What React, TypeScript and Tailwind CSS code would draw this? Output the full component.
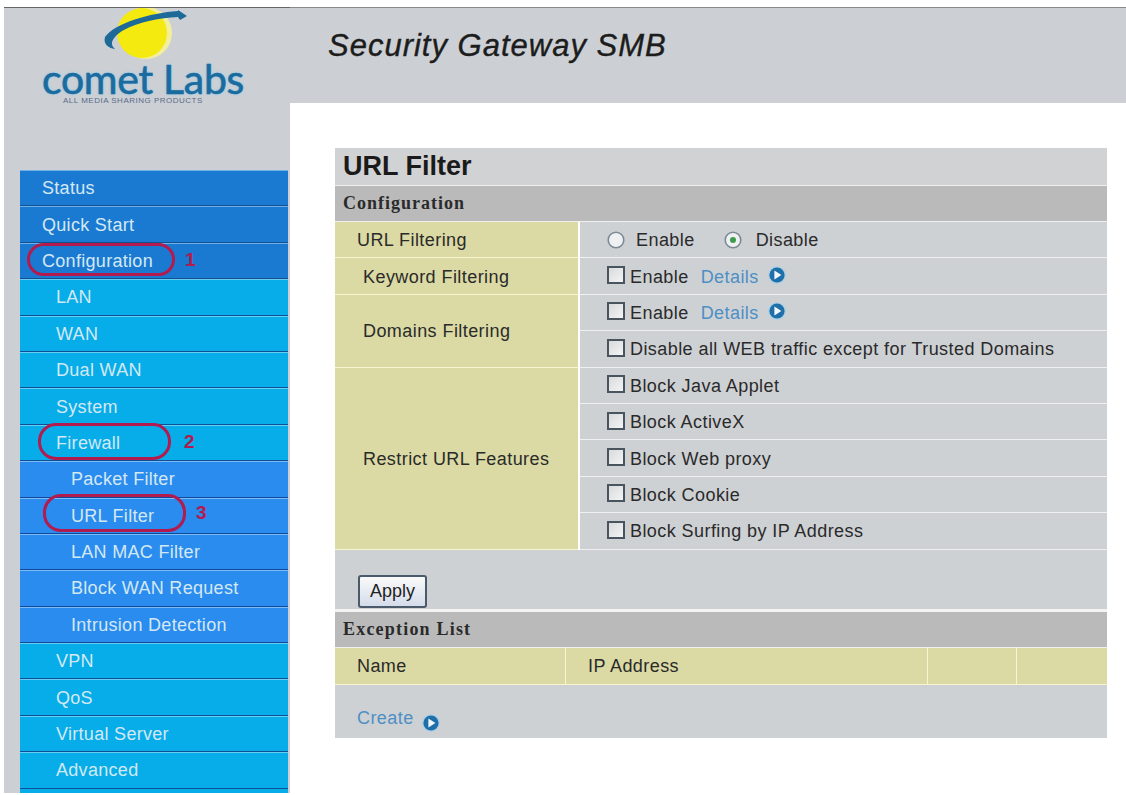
import React from 'react';

const font = 'font-["Liberation_Sans",Arial,sans-serif]';

const navItems: { label: string; kind: 'top' | 'main' | 'sub' }[] = [
    { label: 'Status', kind: 'top' },
    { label: 'Quick Start', kind: 'top' },
    { label: 'Configuration', kind: 'top' },
    { label: 'LAN', kind: 'main' },
    { label: 'WAN', kind: 'main' },
    { label: 'Dual WAN', kind: 'main' },
    { label: 'System', kind: 'main' },
    { label: 'Firewall', kind: 'main' },
    { label: 'Packet Filter', kind: 'sub' },
    { label: 'URL Filter', kind: 'sub' },
    { label: 'LAN MAC Filter', kind: 'sub' },
    { label: 'Block WAN Request', kind: 'sub' },
    { label: 'Intrusion Detection', kind: 'sub' },
    { label: 'VPN', kind: 'main' },
    { label: 'QoS', kind: 'main' },
    { label: 'Virtual Server', kind: 'main' },
    { label: 'Advanced', kind: 'main' },
];

const GoIcon = () => (
    <svg width="18" height="18" viewBox="0 0 18 18" className="block shrink-0">
        <circle cx="9" cy="9" r="8.8" fill="#a9cfe8" />
        <circle cx="9" cy="9" r="7.6" fill="#1f6fa8" />
        <path d="M6.4 4.4 L13.4 9 L6.4 13.6 Z" fill="#f2f7fb" />
    </svg>
);

const Checkbox = () => (
    <span className="w-[18px] h-[18px] mb-[2px] shrink-0 border-2 border-[#4a545e] bg-gradient-to-br from-[#d8dadc] to-[#f4f4f4]" />
);

const Radio = ({ checked }: { checked?: boolean }) => (
    <svg width="18" height="18" viewBox="0 0 18 18" className="block shrink-0">
        <circle cx="9" cy="9" r="7.8" fill="#eef0f2" stroke="#7d8a96" strokeWidth="1.6" />
        {checked && <circle cx="9" cy="9" r="3" fill="#3f9a4a" />}
    </svg>
);

const bodyText = 'text-[18px] tracking-[0.43px] text-[#2a2a2a]';

const CheckRow = ({ label, details }: { label: string; details?: boolean }) => (
    <div className="h-[36.4px] flex items-center pl-[27px] bg-[#ced1d4] border-b border-[#f0f0f0]">
        <Checkbox />
        <span className={`${bodyText} ml-[5px] pt-[2px]`}>{label}</span>
        {details && (
            <>
                <span className="text-[18px] tracking-[0.43px] text-[#4d8fc4] ml-[12px] pt-[2px]">Details</span>
                <span className="ml-[9px] mb-[2px]"><GoIcon /></span>
            </>
        )}
    </div>
);

const LeftCell = ({ label, className }: { label: string; className: string }) => (
    <div className={`${className} ${bodyText} flex items-center bg-[#dbdaa4] border-b border-[#f7f5d0] pt-[2px]`}>
        {label}
    </div>
);

const Mark = ({ className }: { className: string }) => (
    <div className={`absolute rounded-[18px] border-[3px] border-[#b31a4d] ${className}`} />
);

const MarkNum = ({ n, className }: { n: string; className: string }) => (
    <div className={`absolute text-[19px] leading-[20px] font-bold text-[#b31a4d] ${className}`}>{n}</div>
);

export default function App() {
    return (
        <div className={`${font} w-[1126px] h-[795px] bg-white pl-[4px] pt-[7px] overflow-hidden flex items-start`}>
            {/* left column: logo + menu */}
            <aside className="relative w-[286px] shrink-0 bg-[#ccd0d4] border-t border-[#666]">
                <div className="relative h-[162px]">
                    <svg width="110" height="60" viewBox="0 0 110 60" className="absolute left-[96px] top-0">
                        <circle cx="46" cy="25" r="26" fill="#f2ee9c" />
                        <circle cx="42" cy="25" r="25" fill="#f4ea10" />
                        <path
                            d="M78 3 C50 5 15 15 5 29 C3 36 8 40 15 41 C9 36 12 30 22 23 C40 13 60 10 78 9 L80 12 L87 8 L78 2 Z"
                            fill="#1d6a99"
                        />
                    </svg>
                    <div className="absolute left-[38px] top-[56px] text-[41px] leading-[30px] font-['Lato',sans-serif] text-[#1a6b9e] tracking-[-0.3px] whitespace-nowrap [-webkit-text-stroke:0.6px_#1a6b9e] [text-shadow:0_0_3px_#7ec3ee]">
                        comet Labs
                    </div>
                    <div className="absolute left-[59px] top-[88px] text-[8px] leading-[9px] tracking-[0.5px] whitespace-nowrap text-[#5a6a8a]">
                        ALL MEDIA SHARING PRODUCTS
                    </div>
                </div>
                <nav className="ml-[16px] w-[268px]">
                    {navItems.map(item => (
                        <div
                            key={item.label}
                            className={`h-[36.4px] flex items-center border-t border-b pt-[1px] text-[18px] tracking-[0.3px] text-[#d4e8f4] ${
                                item.kind === 'top'
                                    ? 'pl-[22px] bg-[#1a7ad2] border-t-[#6fb2ea] border-b-[#12508f]'
                                    : item.kind === 'main'
                                      ? 'pl-[36px] bg-[#06ade9] border-t-[#66cef2] border-b-[#0e4f98]'
                                      : 'pl-[51px] bg-[#2a8cee] border-t-[#7cbcf4] border-b-[#10499c]'
                            }`}
                        >
                            {item.label}
                        </div>
                    ))}
                    <div className="h-[4px] bg-[#06ade9]" />
                </nav>
                {/* red marks drawn on the screenshot */}
                <Mark className="left-[23px] top-[235px] w-[148px] h-[33px]" />
                <MarkNum n="1" className="left-[181px] top-[242px]" />
                <Mark className="left-[34px] top-[415px] w-[133px] h-[37px]" />
                <MarkNum n="2" className="left-[180px] top-[424px]" />
                <Mark className="left-[39px] top-[486px] w-[143px] h-[38px]" />
                <MarkNum n="3" className="left-[192px] top-[495px]" />
            </aside>

            <main className="flex-1">
                <header className="h-[96px] bg-[#ccd0d4] border-t border-[#888] pl-[38px] pt-[20px]">
                    <h1 className="text-[31px] leading-[36px] italic tracking-[1px] text-[#1c1c1c] [-webkit-text-stroke:0.4px_#1c1c1c]">
                        Security Gateway SMB
                    </h1>
                </header>
                <div className="pl-[45px] pt-[45px]">
                    <div className="w-[772px]">
                        <div className="h-[38px] flex items-center pl-[8px] bg-[#d1d2d3] text-[27px] font-bold text-[#1a1a1a] border-b border-[#f0f0f0]">
                            URL Filter
                        </div>
                        <div className="h-[36px] flex items-center pl-[8px] bg-[#bababa] border-b border-[#f0f0f0] text-[18px] tracking-[1px] font-bold font-['Liberation_Serif',serif] text-[#2a2a2a]">
                            Configuration
                        </div>

                        <div className="grid grid-cols-[243px_1fr] gap-x-[2px]">
                            <div className="flex flex-col">
                                <LeftCell label="URL Filtering" className="h-[36.4px] pl-[22px]" />
                                <LeftCell label="Keyword Filtering" className="h-[36.4px] pl-[28px]" />
                                <LeftCell label="Domains Filtering" className="h-[72.8px] pl-[28px]" />
                                <LeftCell label="Restrict URL Features" className="h-[182px] pl-[28px]" />
                            </div>
                            <div className="flex flex-col">
                                <div className={`${bodyText} h-[36.4px] flex items-center pl-[27px] bg-[#ced1d4] border-b border-[#f0f0f0]`}>
                                    <Radio />
                                    <span className="ml-[11px] pt-[2px]">Enable</span>
                                    <span className="ml-[29px]"><Radio checked /></span>
                                    <span className="ml-[14px] pt-[2px]">Disable</span>
                                </div>
                                <CheckRow label="Enable" details />
                                <CheckRow label="Enable" details />
                                <CheckRow label="Disable all WEB traffic except for Trusted Domains" />
                                <CheckRow label="Block Java Applet" />
                                <CheckRow label="Block ActiveX" />
                                <CheckRow label="Block Web proxy" />
                                <CheckRow label="Block Cookie" />
                                <CheckRow label="Block Surfing by IP Address" />
                            </div>
                        </div>

                        <div className="h-[62px] flex items-end pl-[23px] pb-[1px] bg-[#ced1d4] border-b-[3px] border-[#f4f4f4]">
                            <button className="h-[33px] w-[69px] rounded-[3px] border-2 border-[#4a5a6a] bg-gradient-to-b from-[#fafafa] to-[#d4dcea] text-[18px] text-[#222]">
                                Apply
                            </button>
                        </div>
                        <div className="h-[36.4px] flex items-center pl-[8px] bg-[#bababa] border-b border-[#f0f0f0] text-[18px] tracking-[1.2px] font-bold font-['Liberation_Serif',serif] text-[#2a2a2a]">
                            Exception List
                        </div>
                        <div className={`${bodyText} grid grid-cols-[231px_362px_89px_1fr] h-[37px] bg-[#dbdaa4] border-b border-[#f7f5d0]`}>
                            <div className="flex items-center pl-[22px] pt-[2px] border-r border-[#f7f5d0]">Name</div>
                            <div className="flex items-center pl-[22px] pt-[2px] border-r border-[#f7f5d0]">IP Address</div>
                            <div className="border-r border-[#f7f5d0]" />
                            <div />
                        </div>
                        <div className="h-[53px] flex items-end pl-[22px] pb-[6px] bg-[#ced1d4] text-[18px] tracking-[0.43px] text-[#4d8fc4]">
                            Create
                            <span className="ml-[8px]"><GoIcon /></span>
                        </div>
                    </div>
                </div>
            </main>
        </div>
    );
}
